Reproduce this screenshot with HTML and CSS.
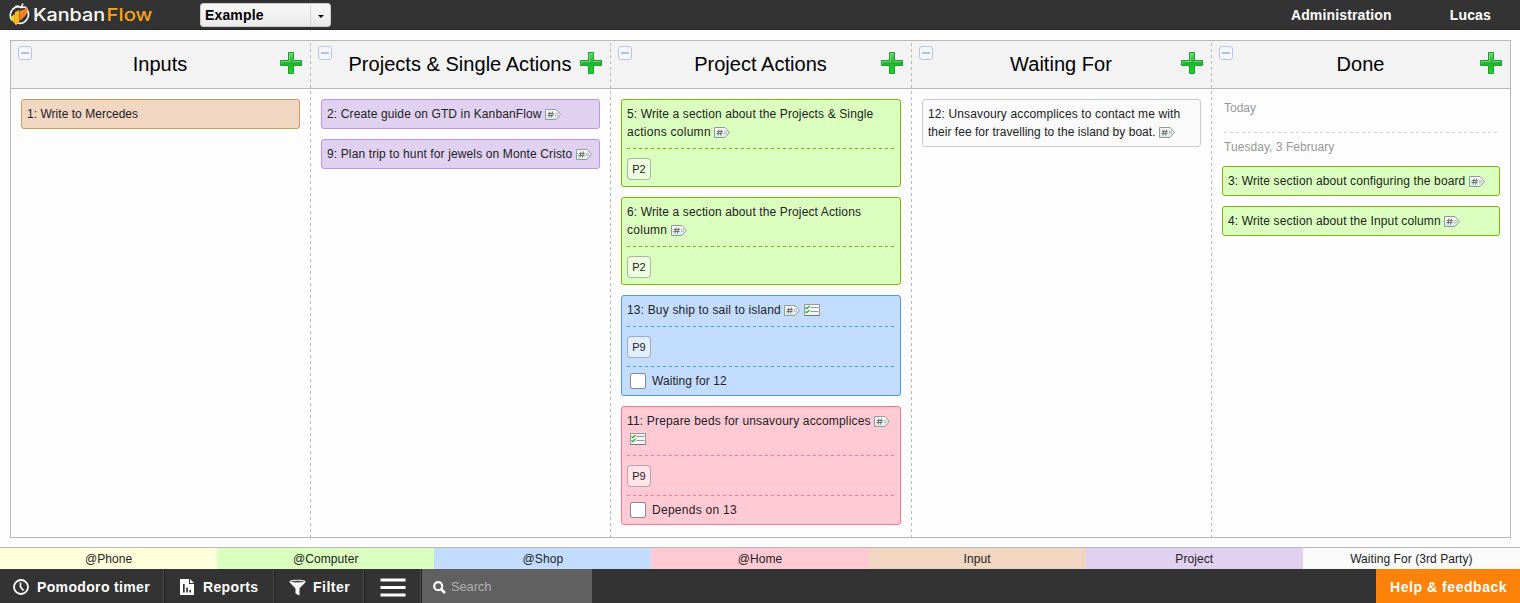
FILE: index.html
```
<!DOCTYPE html>
<html lang="en">
<head>
<meta charset="utf-8">
<title>KanbanFlow</title>
<link rel="stylesheet" href="styles.css">
</head>
<body>
<svg width="0" height="0" class="defs">
  <defs>
    <linearGradient id="green" x1="0" y1="0" x2="0" y2="1"><stop offset="0" stop-color="#63dd68"/><stop offset=".5" stop-color="#25b12f"/><stop offset="1" stop-color="#0fe01c"/></linearGradient>
    <linearGradient id="tagfill" x1="0" y1="0" x2="0" y2="1"><stop offset="0" stop-color="#fff"/><stop offset="1" stop-color="#dcebe6"/></linearGradient>
    <symbol id="plus" viewBox="0 0 22 22"><path d="M8.5.5h5v8h8v5h-8v8h-5v-8h-8v-5h8z" fill="url(#green)" stroke="#229a35"/><path d="M9.5 9.5v-8h3M1.5 12V9.500h8M13 9.500h7.500" fill="none" stroke="#7fe585" stroke-opacity=".7"/></symbol>
    <symbol id="minus" viewBox="0 0 14 14"><rect x=".5" y=".5" width="13" height="13" rx="2.500" fill="#f5f8ff" stroke="#b9c5e8"/><path d="M3 7h8" stroke="#b3bfe3" stroke-width="2"/></symbol>
    <symbol id="tag" viewBox="0 0 16 11"><path d="M.5.5h10.500l4.500 5-4.500 5H.5z" fill="url(#tagfill)" stroke="#8f9c9b"/><path d="M5 2.500l-1 6M7.500 2.500l-1 6M2.800 4.500h6M2.500 6.500h6" stroke="#666" fill="none" stroke-width=".9"/><circle cx="11.500" cy="5.500" r="1.200" fill="#fff" stroke="#8f9c9b" stroke-width=".8"/></symbol>
    <symbol id="list" viewBox="0 0 16 12"><rect x=".5" y=".5" width="15" height="11" fill="#f1f5f3" stroke="#999"/><path d="M0 11.500h16" stroke="#777"/><path d="M6.500 3.500h8M6.500 7.500h8" stroke="#999"/><path d="M1.500 3.500l1.200 1.200L5.500 2M1.500 7.500l1.200 1.200L5.500 6" stroke="#2aa52a" fill="none" stroke-width="1.100"/></symbol>
  </defs>
</svg>
<header class="topbar">
  <div class="logo">
    <svg width="21" height="25" viewBox="0 0 21 25"><path d="M3 18.500A8.800 8.800 0 0 1 4.500 6.500M3.500 7.500C6 4.500 9 4 12 5.500M12 6C10 4 8 3.500 6.500 4.500M12 5.500L14 1.500M12.500 6C15 4 17 5 18 7.500A9 9 0 0 1 8 21" fill="none" stroke="#fff" stroke-width="1.600"/><path d="M2.300 14.500l3.500-2.500v10l-3.500-5z" fill="#ffd21e"/><path d="M6 10l4.500-2v11L7 23.500 6 22z" fill="#ffb51c"/><path d="M11 9l7.500-3c.5 5-1.500 8-7.500 12.500z" fill="#f5821f"/></svg>
    <svg width="122" height="22" viewBox="0 0 122 22"><text x="0" y="17" class="word" textLength="72" lengthAdjust="spacingAndGlyphs">Kanban</text><text x="73.500" y="17" class="word flow" textLength="46" lengthAdjust="spacingAndGlyphs">Flow</text></svg>
  </div>
  <div class="picker"><span>Example</span><i></i></div>
  <nav><a>Administration</a><a>Lucas</a></nav>
</header>
<main class="board">
  <section class="col">
    <h2><svg class="min"><use href="#minus"/></svg>Inputs<svg class="add"><use href="#plus"/></svg></h2>
    <div class="cards"><article class="card input"><p class="tight">1: Write to Mercedes</p></article></div>
  </section>
  <section class="col">
    <h2><svg class="min"><use href="#minus"/></svg>Projects &amp; Single Actions<svg class="add"><use href="#plus"/></svg></h2>
    <div class="cards">
      <article class="card project"><p>2: Create guide on GTD in KanbanFlow <svg class="tag"><use href="#tag"/></svg></p></article>
      <article class="card project"><p>9: Plan trip to hunt for jewels on Monte Cristo <svg class="tag"><use href="#tag"/></svg></p></article>
    </div>
  </section>
  <section class="col">
    <h2><svg class="min"><use href="#minus"/></svg>Project Actions<svg class="add"><use href="#plus"/></svg></h2>
    <div class="cards">
      <article class="card computer"><p>5: Write a section about the Projects &amp; Single<br><span class="loose">actions column </span><svg class="tag"><use href="#tag"/></svg></p><div class="labels"><b>P2</b></div></article>
      <article class="card computer"><p>6: Write a section about the Project Actions<br><span class="loose">column </span><svg class="tag"><use href="#tag"/></svg></p><div class="labels"><b>P2</b></div></article>
      <article class="card shop"><p class="airy">13: Buy ship to sail to island <svg class="tag"><use href="#tag"/></svg> <svg class="list"><use href="#list"/></svg></p><div class="labels"><b>P9</b></div><div class="task"><i></i>Waiting for 12</div></article>
      <article class="card home"><p class="airy">11: Prepare beds for unsavoury accomplices <svg class="tag"><use href="#tag"/></svg><br><svg class="list first"><use href="#list"/></svg></p><div class="labels"><b>P9</b></div><div class="task loose"><i></i>Depends on 13</div></article>
    </div>
  </section>
  <section class="col">
    <h2><svg class="min"><use href="#minus"/></svg>Waiting For<svg class="add"><use href="#plus"/></svg></h2>
    <div class="cards"><article class="card waiting"><p>12: Unsavoury accomplices to contact me with<br><span class="tight">their fee for travelling to the island by boat. </span><svg class="tag"><use href="#tag"/></svg></p></article></div>
  </section>
  <section class="col">
    <h2><svg class="min"><use href="#minus"/></svg>Done<svg class="add"><use href="#plus"/></svg></h2>
    <div class="cards">
      <div class="date today">Today</div>
      <div class="date day">Tuesday, 3 February</div>
      <article class="card computer"><p>3: Write section about configuring the board <svg class="tag"><use href="#tag"/></svg></p></article>
      <article class="card computer"><p>4: Write section about the Input column <svg class="tag"><use href="#tag"/></svg></p></article>
    </div>
  </section>
</main>
<div class="legend"><span class="phone">@Phone</span><span class="computer">@Computer</span><span class="shop">@Shop</span><span class="home">@Home</span><span class="input">Input</span><span class="project">Project</span><span class="waiting">Waiting For (3rd Party)</span></div>
<footer class="toolbar">
  <a class="pomodoro"><svg width="16" height="16" viewBox="0 0 16 16"><circle cx="8" cy="8" r="7" fill="none" stroke="#fff" stroke-width="1.800"/><path d="M7.500 3.500V8l3 3.500" fill="none" stroke="#fff" stroke-width="1.700"/></svg>Pomodoro timer</a>
  <a class="reports"><svg width="14" height="16" viewBox="0 0 14 16"><path d="M0 0h9v5h5v11H0z" fill="#fff"/><path d="M10 0l4 4h-4z" fill="#fff"/><path d="M3 5h1.700v8.500H3zM6.200 8.500h1.700v5H6.200zM9.400 11h1.600v2.500H9.400z" fill="#333"/></svg>Reports</a>
  <a class="filter"><svg width="17" height="17" viewBox="0 0 17 17"><path d="M.5 2.500C.5 0 16.500 0 16.500 2.500c0 1.500-4.500 5-6 7V16.500l-4-2V9.500C5 7.500.5 4 .5 2.500z" fill="#fff"/><ellipse cx="8.500" cy="2.600" rx="6.300" ry="1" fill="#555"/></svg>Filter</a>
  <a class="menu"><svg width="26" height="19" viewBox="0 0 26 19"><path d="M.5 2h25M.5 9.500h25M.5 17h25" stroke="#fff" stroke-width="3"/></svg></a>
  <div class="search"><svg width="13" height="13" viewBox="0 0 13 13"><circle cx="5.200" cy="5.200" r="4" fill="none" stroke="#fff" stroke-width="2.200"/><path d="M8 8l4 4" stroke="#fff" stroke-width="2.500"/></svg>Search</div>
  <a class="help">Help &amp; feedback</a>
</footer>
</body>
</html>
```
FILE: styles.css
```
* { box-sizing: border-box; }
body { margin: 0; width: 1520px; height: 603px; display: flex; flex-direction: column; background: #fdfdfe; color: #222; font: 12px/18px "Liberation Sans", Arial, sans-serif; overflow: hidden; }
.defs { position: absolute; }
.topbar { height: 30px; flex: none; background: #333; border-bottom: 1px solid #262626; display: flex; color: #fff; font-weight: bold; font-size: 14px; line-height: 30px; padding-left: 9px; }
.logo { width: 191px; display: flex; align-items: flex-start; padding-top: 2px; gap: 3px; }
.logo svg { flex: none; }
.logo svg + svg { margin-top: 2px; }
.word { font: 500 17px "Inter", sans-serif; fill: #fff; }
.flow { fill: #f9a21a; }
.picker { width: 131px; height: 24px; margin-top: 3px; border-radius: 3px; background: linear-gradient(#f7f7f7, #ebebeb); border: 1px solid #ccc; color: #000; display: flex; justify-content: space-between; line-height: 23px; padding-left: 4px; letter-spacing: .15px; }
.picker i { width: 20px; border-left: 1px solid #d5d5d5; display: flex; align-items: center; justify-content: center; }
.picker i::after { content: ""; border: 3px solid transparent; border-top-color: #000; border-bottom: 0; margin-top: 3px; }
.topbar nav { margin-left: auto; padding-right: 29px; display: flex; gap: 58px; letter-spacing: .15px; }
.board { height: 498px; flex: none; margin: 10px 9px 9px 10px; border: 1px solid #b8b8b8; display: grid; grid-template-columns: 300px 300px 301px 300px 1fr; background: linear-gradient(#f3f3f3 47px, #b8b8b8 47px, #b8b8b8 48px, #fdfdfe 48px); }
.col { min-width: 0; background: repeating-linear-gradient(to bottom, #b8b8b8 0 3px, transparent 3px 6px) right 2px / 1px 100% no-repeat; }
.col:last-child { background: none; }
h2 { margin: 0; height: 48px; font-size: 20px; font-weight: normal; color: #000; display: flex; justify-content: space-between; line-height: 46px; padding: 0 9px 0 7px; letter-spacing: .03px; }
.col:last-child h2 { padding-right: 8px; }
.min { width: 14px; height: 14px; margin: 5px 8px 0 0; }
.add { width: 22px; height: 22px; margin-top: 11px; }
.cards { padding: 10px 11px 0 10px; display: flex; flex-direction: column; gap: 10px; }
.col:last-child .cards { padding-right: 10px; }
.card { border: 1px solid; border-radius: 3px; padding: 5px; }
.card p { margin: 0; color: #222; white-space: nowrap; letter-spacing: .125px; }
.card .airy { letter-spacing: .17px; }
.card .tight { letter-spacing: .03px; }
.card .loose { letter-spacing: .27px; }
.card svg { vertical-align: -2px; }
.tag { width: 16px; height: 11px; }
.list { width: 16px; height: 12px; margin-left: 0; }
.list.first { margin-left: 3px; }
.input { background: #f1d6c1; border-color: #d09c58; --line: #d09c58; }
.project { background: #e1d1f1; border-color: #bd92ea; }
.computer { background: #dbffbf; border-color: #7fb800; --line: #7fb800; }
.shop { background: #c2ddff; border-color: #4797ff; --line: #4797ff; }
.home { background: #ffcad4; border-color: #ff7490; --line: #ff7490; }
.waiting { background: #fafafa; border-color: #cbcbcb; }
.phone { background: #ffffdc; }
.labels, .task { background: repeating-linear-gradient(to right, var(--line) 0 3px, transparent 3px 6px) 0 0 / 100% 1px no-repeat; color: #222; }
.labels { margin-top: 7px; padding: 10px 0 1px; }
.labels b { display: block; width: 24px; height: 22px; border: 1px solid rgba(0,0,0,.28); border-radius: 4px; background: rgba(255,255,255,.5); font: 11px/21px "Liberation Sans", Arial, sans-serif; text-align: center; }
.task { margin-top: 7px; padding: 7px 0 1px 3px; height: 24px; display: flex; align-items: center; line-height: 16px; gap: 6px; letter-spacing: .08px; }
.task i { width: 16px; height: 16px; background: #fff; border: 1px solid #888; border-radius: 2px; }
.date { color: #999; padding-left: 2px; line-height: 18px; }
.today { height: 34px; background: repeating-linear-gradient(to right, #d5d5d8 0 3px, transparent 3px 6px) 2px 100% / 273px 1px no-repeat; }
.day { margin-top: -5px; letter-spacing: .05px; }
.legend { height: 22px; flex: none; border-top: 1px solid #b8b8b8; display: grid; grid-template-columns: repeat(7, 1fr); text-align: center; line-height: 23px; letter-spacing: .07px; }
.toolbar { height: 34px; flex: none; background: #333; display: flex; color: #fff; font-weight: bold; font-size: 14px; line-height: 34px; }
.toolbar a { display: flex; align-items: center; border-right: 1px solid #222; box-shadow: inset -1px 0 #4b4b4b; gap: 8px; padding: 2px 0 0 13px; letter-spacing: .35px; }
.pomodoro { width: 165px; }
.toolbar .reports { width: 110px; padding-left: 15px; gap: 9px; }
.toolbar .filter { width: 90px; padding-left: 14px; gap: 7px; letter-spacing: .5px; }
.toolbar .menu { width: 57px; padding-left: 15px; }
.search { width: 170px; background: #606060; font: 13px/34px "Liberation Sans", Arial, sans-serif; color: #b0b0b0; display: flex; align-items: center; gap: 5px; padding: 2px 0 0 11px; letter-spacing: -.15px; }
.toolbar .help { margin-left: auto; width: 144px; padding-left: 14px; background: #fc820a; border: 0; box-shadow: none; letter-spacing: .55px; }
```
